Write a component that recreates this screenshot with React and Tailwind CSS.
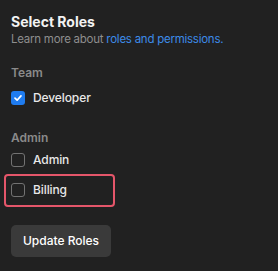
import React from "react";

function Box({ checked }) {
  if (checked) {
    return (
      <span className="flex h-[14px] w-[14px] shrink-0 items-center justify-center rounded-[3px] bg-[#1f7cf0]">
        <svg width="10" height="10" viewBox="0 0 10 10" fill="none">
          <path d="M2 5.2 L4.1 7.2 L8 2.9" stroke="#ffffff" strokeWidth="1.7" strokeLinecap="round" strokeLinejoin="round" />
        </svg>
      </span>
    );
  }
  return <span className="h-[14px] w-[14px] shrink-0 rounded-[3px] border border-[#727272]" />;
}

function Row({ checked, label }) {
  return (
    <div className="flex h-[20px] items-center gap-[8px]">
      <Box checked={checked} />
      <span className="text-[12px] font-medium leading-[20px] tracking-[-0.1px] text-[#e8e8e8]">{label}</span>
    </div>
  );
}

export default function App() {
  return (
    <div className="flex h-[271px] w-[278px] flex-col bg-[#212121] px-[11px] pt-[13px] font-[Inter,Liberation_Sans,sans-serif]">
      <h2 className="text-[14px] font-bold leading-[18px] text-[#f2f2f2]">Select Roles</h2>
      <p className="mt-[1px] text-[11.5px] leading-[15px] tracking-[-0.25px] text-[#8e8e8e]">
        Learn more about <span className="text-[#3d8be8]">roles and permissions.</span>
      </p>
      <div className="mt-[18px] text-[12px] font-semibold leading-[16px] text-[#8a8a8a]">Team</div>
      <div className="mt-[7px]">
        <Row checked label="Developer" />
      </div>
      <div className="mt-[22px] text-[12px] font-semibold leading-[16px] text-[#8a8a8a]">Admin</div>
      <div className="mt-[4px]">
        <Row label="Admin" />
      </div>
      <div className="-ml-[7px] mt-[4px] w-[111px] rounded-[4px] border-2 border-[#e5566a] px-[5px] pb-[5px] pt-[4px]">
        <Row label="Billing" />
      </div>
      <button className="mt-[18px] h-[32px] w-[100px] rounded-[5px] bg-[#3a3a3a] text-[12px] font-medium text-white">
        Update Roles
      </button>
    </div>
  );
}
